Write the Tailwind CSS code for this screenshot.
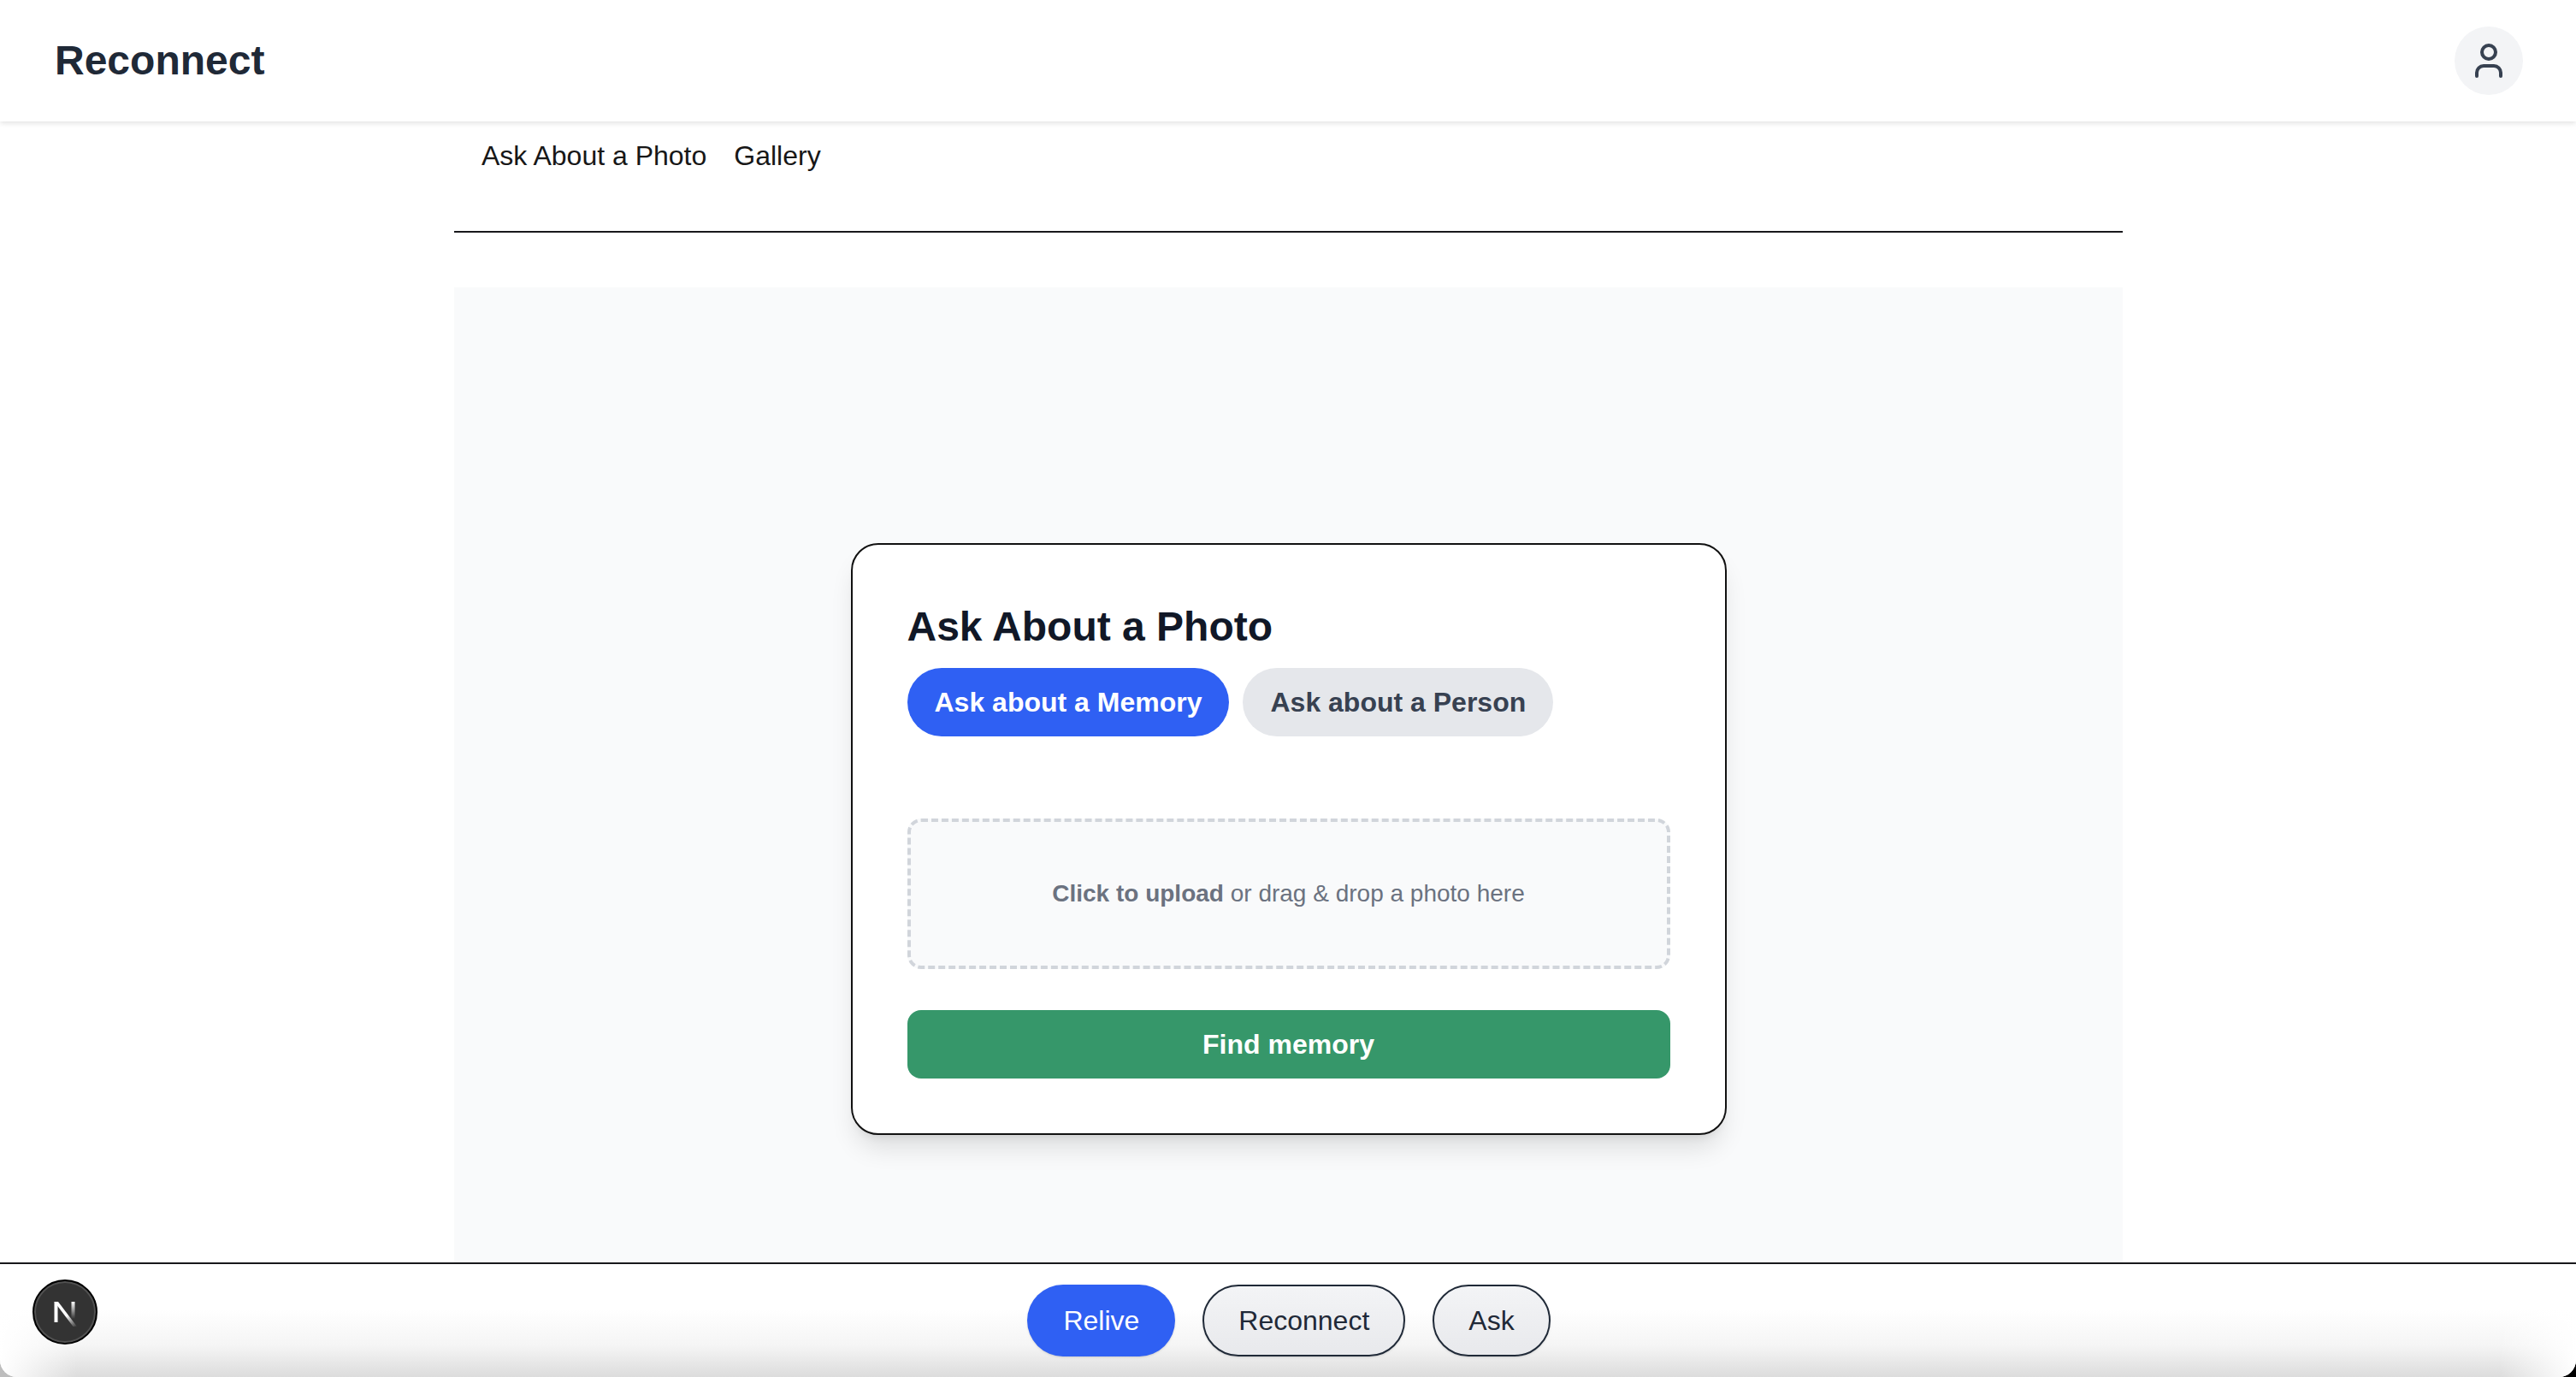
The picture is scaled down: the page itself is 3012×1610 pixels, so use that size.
<!doctype html>
<html lang="en">
<head>
    <meta charset="UTF-8">
    <title>Reconnect</title>
    <script src="https://cdn.jsdelivr.net/npm/@tailwindcss/browser@4"></script>
</head>
<body class="h-[1610px] overflow-hidden bg-white font-['Liberation_Sans',Arial,sans-serif]">
<div class="h-[1610px] bg-[linear-gradient(90deg,#bdbdbd_50%,#000_50%)]">
<div class="relative flex h-[1610px] flex-col overflow-hidden rounded-b-[20px] bg-white">
    <header class="relative z-10 flex h-[142px] shrink-0 items-center justify-between bg-white pl-[64px] pr-[62px] shadow-[0_2px_6px_rgba(0,0,0,0.12)]">
        <h1 class="text-[48px] leading-[64px] font-bold text-[#1f2937]">Reconnect</h1>
        <button class="flex h-[80px] w-[80px] items-center justify-center rounded-full bg-[#f3f4f6]">
            <svg class="h-[48px] w-[48px]" viewBox="0 0 24 24" fill="none" stroke="#374151" stroke-width="2" stroke-linecap="round" stroke-linejoin="round">
                <path d="M19 21v-2a4 4 0 0 0-4-4H9a4 4 0 0 0-4 4v2"/>
                <circle cx="12" cy="7" r="4"/>
            </svg>
        </button>
    </header>

    <main class="ml-[531px] w-[1951px]">
        <nav class="flex h-[130px] gap-[32px] border-b-2 border-[#18181b] px-[32px] pt-[16px] text-[32px] leading-[48px] text-[#171717]">
            <a>Ask About a Photo</a>
            <a>Gallery</a>
        </nav>
        <section class="mt-[64px] flex h-[1290px] items-center justify-center bg-[#f9fafb]">
            <div class="w-[1024px] rounded-[32px] border-2 border-[#111] bg-white p-[64px] shadow-[0_20px_30px_-6px_rgba(0,0,0,0.12),0_8px_12px_-8px_rgba(0,0,0,0.12)]">
                <h2 class="mb-[16px] text-[48px] leading-[64px] font-bold text-[#111827]">Ask About a Photo</h2>
                <div class="flex gap-[16px]">
                    <button class="h-[80px] rounded-full bg-[#2f60f3] px-[32px] text-[32px] font-bold text-white">Ask about a Memory</button>
                    <button class="h-[80px] rounded-full bg-[#e5e7eb] px-[32px] text-[32px] font-bold text-[#374151]">Ask about a Person</button>
                </div>
                <div class="mt-[96px] flex h-[176px] items-center justify-center rounded-[16px] border-4 border-dashed border-[#d1d5db] bg-[#f9fafb] text-[28px] text-[#6b7280]">
                    <p><span class="font-bold">Click to upload</span> or drag &amp; drop a photo here</p>
                </div>
                <button class="mt-[48px] h-[80px] w-full rounded-[16px] bg-[#36976a] text-[32px] font-bold text-white">Find memory</button>
            </div>
        </section>
    </main>

    <footer class="absolute inset-x-0 bottom-0 z-20 flex h-[134px] justify-center gap-[32px] border-t-2 border-[#18181b] bg-[linear-gradient(90deg,#fff,transparent_90px,transparent_calc(100%-90px),#fff),linear-gradient(180deg,#fff_40%,#f5f5f5_72%,#dcdcdc)] pt-[24px] pl-[2px]">
        <button class="h-[84px] rounded-full bg-[#2f60f3] px-[42px] text-[32px] text-white shadow-sm">Relive</button>
        <button class="h-[84px] rounded-full border-2 border-[#1f2937] bg-gradient-to-b from-[#f3f4f6] to-[#e8e9ec] px-[40px] text-[32px] text-[#1f2937] shadow-sm">Reconnect</button>
        <button class="h-[84px] rounded-full border-2 border-[#1f2937] bg-gradient-to-b from-[#f3f4f6] to-[#e8e9ec] px-[40px] text-[32px] text-[#1f2937] shadow-sm">Ask</button>
    </footer>

    <!-- next dev indicator -->
    <div class="absolute bottom-[38px] left-[38px] z-30 flex h-[76px] w-[76px] items-center justify-center rounded-full border-2 border-black bg-[#333] shadow-[inset_0_0_0_2px_rgba(255,255,255,0.15)]">
        <svg class="h-[36px] w-[36px]" viewBox="0 0 36 36" fill="none">
            <defs>
                <linearGradient id="nfade" x1="0" y1="0" x2="0" y2="1"><stop offset="0" stop-color="#fff"/><stop offset="1" stop-color="#fff" stop-opacity="0"/></linearGradient>
                <linearGradient id="dfade" gradientUnits="userSpaceOnUse" x1="5" y1="6" x2="31" y2="36"><stop offset="0.55" stop-color="#fff"/><stop offset="1" stop-color="#fff" stop-opacity="0"/></linearGradient>
            </defs>
            <rect x="5.5" y="6" width="4" height="24" fill="#fff"/>
            <rect x="25.5" y="6" width="4" height="20" fill="url(#nfade)"/>
            <path d="M5.5 6h4.5l22 29h-4.5z" fill="url(#dfade)"/>
        </svg>
    </div>
</div>
</div>
</body>
</html>
